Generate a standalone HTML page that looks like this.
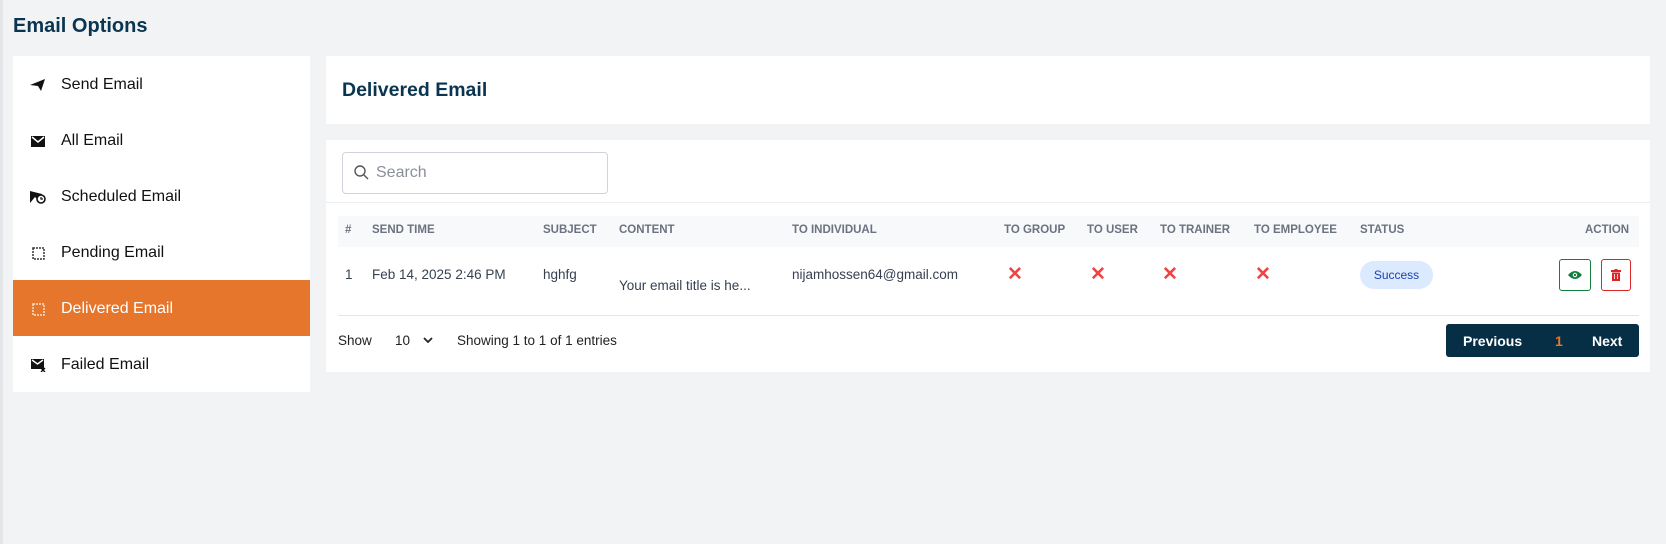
<!DOCTYPE html>
<html><head><meta charset="utf-8"><style>
*{box-sizing:border-box;margin:0;padding:0}
body{width:1666px;height:544px;background:#f2f3f5;font-family:"Liberation Sans",sans-serif;position:relative;overflow:hidden;color:#1f2937}
.abs{position:absolute}
.title{left:13px;top:15px;font-size:20px;font-weight:bold;color:#0a3550}
.side{left:13px;top:56px;width:297px;height:336px;background:#fff}
.item{position:absolute;left:0;width:297px;height:56px;display:flex;align-items:center;font-size:16px;color:#111;padding-top:2px}
.item .ic{width:48px;display:flex;justify-content:center;padding-left:2px}
.item span.t{margin-left:0}
.active{background:#e6762b;color:#fff}
.card{background:#fff;left:326px;width:1324px}
.th{font-size:11.5px;font-weight:bold;color:#6b7280;top:224px}
.td{font-size:13.5px;color:#374151;top:267px}
.x{color:#ef4444;font-size:19px;font-weight:bold;top:263px}
</style></head><body>
<div class="abs" style="left:0;top:0;width:3px;height:544px;background:#e4e5e8"></div>
<div class="abs title">Email Options</div>
<div class="abs side">
 <div class="item" style="top:0"><div class="ic"><svg width="16" height="12" viewBox="0 0 16 12"><path d="M0 6 L15 0 L11 12 L8 7 Z" fill="#111"/></svg></div><span class="t">Send Email</span></div>
 <div class="item" style="top:56px"><div class="ic"><svg width="14" height="11" viewBox="0 0 14 11"><rect width="14" height="11" fill="#111"/><path d="M1 1 L7 6 L13 1" stroke="#fff" stroke-width="1.5" fill="none"/></svg></div><span class="t">All Email</span></div>
 <div class="item" style="top:112px"><div class="ic"><svg width="16" height="14" viewBox="0 0 16 14"><path d="M0 1 L12 4 L8 10 L5 7 L0 13 Z" fill="#111"/><circle cx="11" cy="9" r="4" fill="#fff" stroke="#111" stroke-width="1.6"/><path d="M11 7v2h2" stroke="#111" stroke-width="1.2" fill="none"/></svg></div><span class="t">Scheduled Email</span></div>
 <div class="item" style="top:168px"><div class="ic"><svg width="13" height="13" viewBox="0 0 13 13"><rect x="1" y="1" width="11" height="11" fill="none" stroke="#333" stroke-width="1.5" stroke-dasharray="2 1"/></svg></div><span class="t">Pending Email</span></div>
 <div class="item active" style="top:224px"><div class="ic"><svg width="13" height="13" viewBox="0 0 13 13"><rect x="1" y="1" width="11" height="11" fill="none" stroke="#fde2cf" stroke-width="1.5" stroke-dasharray="2 1"/></svg></div><span class="t">Delivered Email</span></div>
 <div class="item" style="top:280px"><div class="ic"><svg width="15" height="14" viewBox="0 0 15 14"><rect y="1" width="13" height="10" fill="#111"/><path d="M1 2 L6.5 6 L12 2" stroke="#fff" stroke-width="1.4" fill="none"/><path d="M10 10l4 4M14 10l-4 4" stroke="#111" stroke-width="1.4"/></svg></div><span class="t">Failed Email</span></div>
</div>
<div class="abs card" style="top:56px;height:68px"><div class="abs" style="left:16px;top:23px;font-size:19.5px;font-weight:bold;color:#0a3550">Delivered Email</div></div>
<div class="abs card" style="top:140px;height:232px">
 <div class="abs" style="left:16px;top:12px;width:266px;height:42px;border:1px solid #ced4da;border-radius:4px"></div>
 <svg class="abs" style="left:28px;top:25px" width="15" height="15" viewBox="0 0 15 15"><circle cx="6" cy="6" r="5" stroke="#555" stroke-width="1.4" fill="none"/><path d="M10 10l4 4" stroke="#555" stroke-width="1.4"/></svg>
 <div class="abs" style="left:50px;top:24px;font-size:16px;color:#8a9099">Search</div>
 <div class="abs" style="left:0;top:62px;width:1324px;height:1px;background:#eceef0"></div>
 <div class="abs" style="left:12px;top:76px;width:1301px;height:31px;background:#f8f9fa"></div>
 <div class="abs" style="left:12px;top:175px;width:1301px;height:1px;background:#e3e5e8"></div>
</div>
<div class="abs th" style="left:345px">#</div>
<div class="abs th" style="left:372px">SEND TIME</div>
<div class="abs th" style="left:543px">SUBJECT</div>
<div class="abs th" style="left:619px">CONTENT</div>
<div class="abs th" style="left:792px">TO INDIVIDUAL</div>
<div class="abs th" style="left:1004px">TO GROUP</div>
<div class="abs th" style="left:1087px">TO USER</div>
<div class="abs th" style="left:1160px">TO TRAINER</div>
<div class="abs th" style="left:1254px">TO EMPLOYEE</div>
<div class="abs th" style="left:1360px">STATUS</div>
<div class="abs th" style="left:1585px">ACTION</div>
<div class="abs td" style="left:345px">1</div>
<div class="abs td" style="left:372px">Feb 14, 2025 2:46 PM</div>
<div class="abs td" style="left:543px">hghfg</div>
<div class="abs td" style="left:619px;top:278px">Your email title is he...</div>
<div class="abs td" style="left:792px">nijamhossen64@gmail.com</div>
<div class="abs x" style="left:1007px">✕</div>
<div class="abs x" style="left:1090px">✕</div>
<div class="abs x" style="left:1162px">✕</div>
<div class="abs x" style="left:1255px">✕</div>
<div class="abs" style="left:1360px;top:261px;width:73px;height:28px;border-radius:14px;background:#dbeafe;color:#1e40af;font-size:12px;text-align:center;line-height:28px">Success</div>
<div class="abs" style="left:1559px;top:259px;width:32px;height:32px;border:1px solid #15803d;border-radius:3px;display:flex;align-items:center;justify-content:center"><svg width="14" height="10" viewBox="0 0 14 10"><path d="M0 5 Q7 -3 14 5 Q7 13 0 5Z" fill="#15803d"/><circle cx="7" cy="5" r="2.2" fill="#fff"/><circle cx="7" cy="5" r="1.2" fill="#15803d"/></svg></div>
<div class="abs" style="left:1601px;top:259px;width:30px;height:32px;border:1px solid #dc2626;border-radius:3px;display:flex;align-items:center;justify-content:center"><svg width="10" height="12" viewBox="0 0 10 12"><rect x="0" y="1" width="10" height="2" fill="#dc2626"/><rect x="3.5" y="0" width="3" height="1.5" fill="#dc2626"/><rect x="1" y="3.5" width="8" height="8.5" fill="#dc2626"/><path d="M3.5 5v5M6.5 5v5" stroke="#fff" stroke-width="0.8"/></svg></div>
<div class="abs" style="left:338px;top:333px;font-size:13.5px;color:#222">Show</div>
<div class="abs" style="left:395px;top:333px;font-size:13.5px;color:#222">10</div>
<svg class="abs" style="left:423px;top:336px" width="10" height="8" viewBox="0 0 10 8"><path d="M1 2l4 4 4-4" stroke="#222" stroke-width="1.8" fill="none"/></svg>
<div class="abs" style="left:457px;top:333px;font-size:13.5px;color:#222">Showing 1 to 1 of 1 entries</div>
<div class="abs" style="left:1446px;top:324px;width:193px;height:33px;background:#062e45;border-radius:3px;color:#fff;font-size:14px;font-weight:bold">
 <span class="abs" style="left:17px;top:9px">Previous</span>
 <span class="abs" style="left:109px;top:9px;color:#e6762b">1</span>
 <span class="abs" style="left:146px;top:9px">Next</span>
</div>
</body></html>
